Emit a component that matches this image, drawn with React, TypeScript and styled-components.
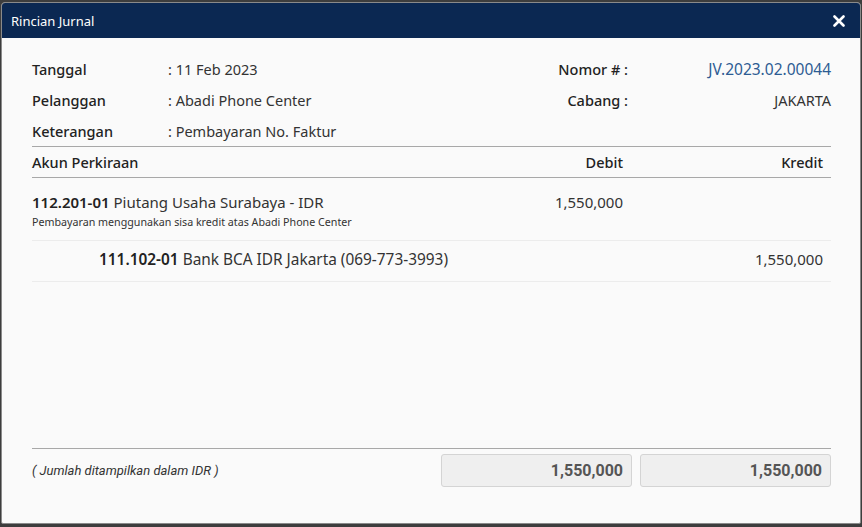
import styled, { createGlobalStyle } from "styled-components";

const GlobalStyle = createGlobalStyle`
  html, body {
    margin: 0;
    padding: 0;
    background: #3d3d3d;
    font-family: "Noto Sans", "Open Sans", sans-serif;
    color: #222;
  }
  * { box-sizing: border-box; }
`;

const info = [
  { label: "Tanggal", value: "11 Feb 2023" },
  { label: "Pelanggan", value: "Abadi Phone Center" },
  { label: "Keterangan", value: "Pembayaran No. Faktur" },
];

const lines = [
  {
    code: "112.201-01",
    name: "Piutang Usaha Surabaya - IDR",
    note: "Pembayaran menggunakan sisa kredit atas Abadi Phone Center",
    debit: "1,550,000",
    credit: "",
    indent: false,
  },
  {
    code: "111.102-01",
    name: "Bank BCA IDR Jakarta (069-773-3993)",
    note: "",
    debit: "",
    credit: "1,550,000",
    indent: true,
  },
];

const App = () => {
  return (
    <Page>
      <GlobalStyle />
      <Modal>
        <Header>
          <h1>Rincian Jurnal</h1>
          <CloseButton aria-label="close">
            <svg width="12" height="12" viewBox="0 0 12 12">
              <path d="M1.5 1.5 L10.5 10.5 M10.5 1.5 L1.5 10.5" stroke="#fff" strokeWidth="2.6" strokeLinecap="round" />
            </svg>
          </CloseButton>
        </Header>
        <Body>
          <InfoGrid>
            <InfoList>
              {info.map((el) => (
                <InfoRow key={el.label}>
                  <span className="label">{el.label}</span>
                  <span>: {el.value}</span>
                </InfoRow>
              ))}
            </InfoList>
            <MetaList>
              <MetaRow>
                <span className="label">Nomor # :</span>
                <span className="value link">JV.2023.02.00044</span>
              </MetaRow>
              <MetaRow>
                <span className="label">Cabang :</span>
                <span className="value">JAKARTA</span>
              </MetaRow>
            </MetaList>
          </InfoGrid>

          <Table>
            <TableHead>
              <span>Akun Perkiraan</span>
              <span className="num debit">Debit</span>
              <span className="num">Kredit</span>
            </TableHead>
            {lines.map((el) => (
              <TableRow key={el.code} $indent={el.indent}>
                <div className="account">
                  <div className="title">
                    <b>{el.code}</b> {el.name}
                  </div>
                  {el.note && <div className="note">{el.note}</div>}
                </div>
                <span className="num debit">{el.debit}</span>
                <span className="num">{el.credit}</span>
              </TableRow>
            ))}
          </Table>

          <Footer>
            <em>( Jumlah ditampilkan dalam IDR )</em>
            <TotalBox>1,550,000</TotalBox>
            <TotalBox>1,550,000</TotalBox>
          </Footer>
        </Body>
      </Modal>
    </Page>
  );
};

export default App;

const Page = styled.div`
  width: 862px;
  height: 527px;
  padding: 2px 1px 3px 1px;
  overflow: hidden;
`;

const Modal = styled.div`
  height: 100%;
  display: flex;
  flex-direction: column;
  background: #fafafa;
  border: 1px solid #8a8a8a;
  border-radius: 4px 4px 2px 2px;
  overflow: hidden;
`;

const Header = styled.div`
  display: flex;
  align-items: center;
  justify-content: space-between;
  height: 35px;
  padding: 0 15px 0 9px;
  background: #0b2852;

  h1 {
    margin: 0;
    font-size: 13px;
    font-weight: 400;
    color: #fff;
  }
`;

const CloseButton = styled.button`
  display: flex;
  padding: 0;
  border: none;
  background: transparent;
  cursor: pointer;
`;

const Body = styled.div`
  flex: 1;
  display: flex;
  flex-direction: column;
  padding: 15px 29px 0 30px;
`;

const InfoGrid = styled.div`
  display: flex;
  justify-content: space-between;
  font-size: 14.5px;
`;

const InfoList = styled.div`
  display: flex;
  flex-direction: column;
`;

const labelStyle = `
  font-weight: 500;
  color: #222;
`;

const InfoRow = styled.div`
  display: grid;
  grid-template-columns: 136px auto;
  height: 31px;
  align-items: center;
  color: #333;

  .label {
    ${labelStyle}
  }
`;

const MetaList = styled.div`
  display: flex;
  flex-direction: column;
`;

const MetaRow = styled.div`
  display: grid;
  grid-template-columns: 110px 203px;
  height: 31px;
  align-items: center;

  .label {
    text-align: right;
    ${labelStyle}
  }
  .value {
    text-align: right;
    color: #333;
  }
  .link {
    color: #2d5c93;
    font-size: 15.5px;
  }
`;

const Table = styled.div`
  border-top: 1px solid #a8a8a8;
`;

const cols = `
  display: grid;
  grid-template-columns: minmax(0, 1fr) 191px 199px;
  .num {
    text-align: right;
    padding-right: 8px;
  }
  .debit {
    padding-right: 9px;
  }
`;

const TableHead = styled.div`
  ${cols}
  ${labelStyle}
  height: 31px;
  align-items: center;
  border-bottom: 1px solid #a8a8a8;
  font-size: 14.5px;
`;

const TableRow = styled.div<{ $indent: boolean }>`
  ${cols}
  padding: ${(p) => (p.$indent ? "8px 0 11px" : "14px 0 11px")};
  border-bottom: 1px solid #ececec;
  font-size: 15px;
  color: #333;

  .account {
    padding-left: ${(p) => (p.$indent ? "67px" : "0")};
    font-size: ${(p) => (p.$indent ? "15.4px" : "15px")};
    white-space: nowrap;
  }
  .title b {
    font-weight: 600;
    color: #222;
  }
  .note {
    margin-top: 3px;
    font-size: 10.7px;
    color: #333;
  }
  .num {
    align-self: start;
  }
`;

const Footer = styled.div`
  margin-top: auto;
  margin-bottom: 36px;
  border-top: 1px solid #a8a8a8;
  padding-top: 5px;
  display: grid;
  grid-template-columns: 1fr 191px 191px;
  column-gap: 8px;
  align-items: center;

  em {
    font-family: "Liberation Sans Narrow", Roboto, sans-serif;
    font-size: 13px;
    color: #333;
  }
`;

const TotalBox = styled.div`
  height: 33px;
  display: flex;
  align-items: center;
  justify-content: flex-end;
  padding-right: 8px;
  background: #efefef;
  border: 1px solid #d4d4d4;
  border-radius: 3px;
  font-family: "Liberation Sans Narrow", Roboto, sans-serif;
  font-weight: 700;
  font-size: 16px;
  color: #555;
`;
